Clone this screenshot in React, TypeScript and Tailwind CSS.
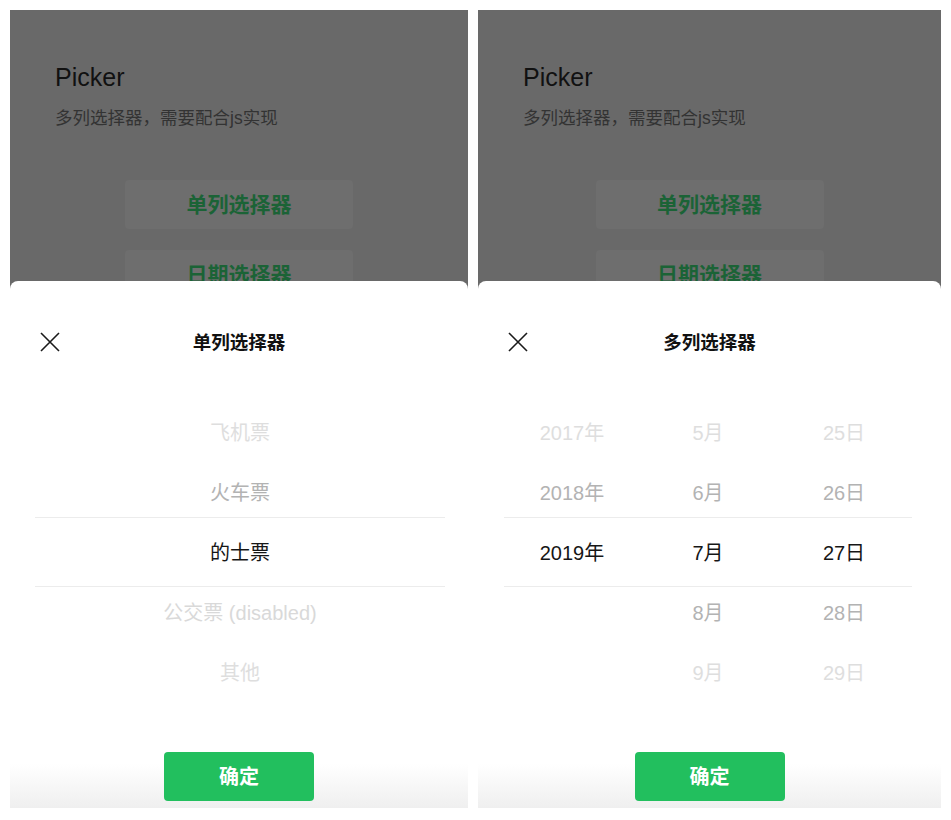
const font = "font-['Liberation_Sans','Noto_Sans_CJK_SC',sans-serif]";

const toneClass = [
  "text-[#dedede]",
  "text-[#b3b3b3]",
  "text-[#161616]",
  "text-[#b3b3b3]",
  "text-[#dedede]",
];

function CloseIcon() {
  return (
    <svg width="20" height="20" viewBox="0 0 20 20" className="text-[#1a1a1a]">
      <path d="M1 1 L19 19 M19 1 L1 19" stroke="currentColor" strokeWidth="1.6" fill="none" />
    </svg>
  );
}

function Column({ cells }: { cells: string[] }) {
  return (
    <div className="flex-1 flex flex-col">
      {cells.map((t, i) => (
        <div
          key={i}
          className={`h-[60px] flex items-center justify-center text-[20px] ${
            t.includes("disabled") ? "text-[#d9d9d9]" : toneClass[i]
          }`}
        >
          {t}
        </div>
      ))}
    </div>
  );
}

function Panel({
  width,
  inset,
  title,
  columns,
}: {
  width: string;
  inset: string;
  title: string;
  columns: string[][];
}) {
  return (
    <div className={`relative h-[798px] bg-[#696969] overflow-hidden ${width}`}>
      <div className="pt-[52px] px-[45px]">
        <div className="text-[25px] leading-[30px] text-[#111]">Picker</div>
        <div className="mt-[14px] text-[17.5px] leading-[24px] text-[#333]">多列选择器，需要配合js实现</div>
      </div>
      <div className="mt-[50px] flex flex-col items-center gap-[21px]">
        <div className="w-[228px] h-[49px] rounded-[4px] bg-[#6e6e6e] flex items-center justify-center text-[21px] font-bold text-[#1b6336]">
          单列选择器
        </div>
        <div className="w-[228px] h-[49px] rounded-[4px] bg-[#6e6e6e] flex items-center justify-center text-[21px] font-bold text-[#1b6336]">
          日期选择器
        </div>
      </div>

      <div className="absolute inset-x-0 bottom-0 top-[271px] rounded-t-[8px] bg-white flex flex-col">
        <div className="relative mt-[44px] h-[36px] flex items-center justify-center">
          <div className="absolute left-[30px] top-[7px]">
            <CloseIcon />
          </div>
          <div className="text-[18.5px] font-bold text-[#111]">{title}</div>
        </div>
        <div className={`relative mt-[42px] flex ${inset}`}>
          <div className="absolute inset-x-0 top-[114px] h-[70px] border-y border-[#ececec]" />
          {columns.map((cells, i) => (
            <Column key={i} cells={cells} />
          ))}
        </div>
        <div className="mt-[49px] flex justify-center relative z-10">
          <div className="w-[150px] h-[49px] rounded-[4px] bg-[#22bf5e] flex items-center justify-center text-[20px] font-bold text-white">
            确定
          </div>
        </div>
        <div className="absolute inset-x-0 bottom-0 h-[44px] bg-gradient-to-b from-white to-[#efefef]" />
      </div>
    </div>
  );
}

export default function App() {
  return (
    <div className={`w-[951px] h-[820px] bg-white flex gap-[10px] px-[10px] pt-[10px] ${font}`}>
      <Panel
        width="w-[458px]"
        inset="ml-[25px] mr-[23px]"
        title="单列选择器"
        columns={[["飞机票", "火车票", "的士票", "公交票 (disabled)", "其他"]]}
      />
      <Panel
        width="w-[463px]"
        inset="ml-[26px] mr-[29px]"
        title="多列选择器"
        columns={[
          ["2017年", "2018年", "2019年", "", ""],
          ["5月", "6月", "7月", "8月", "9月"],
          ["25日", "26日", "27日", "28日", "29日"],
        ]}
      />
    </div>
  );
}
